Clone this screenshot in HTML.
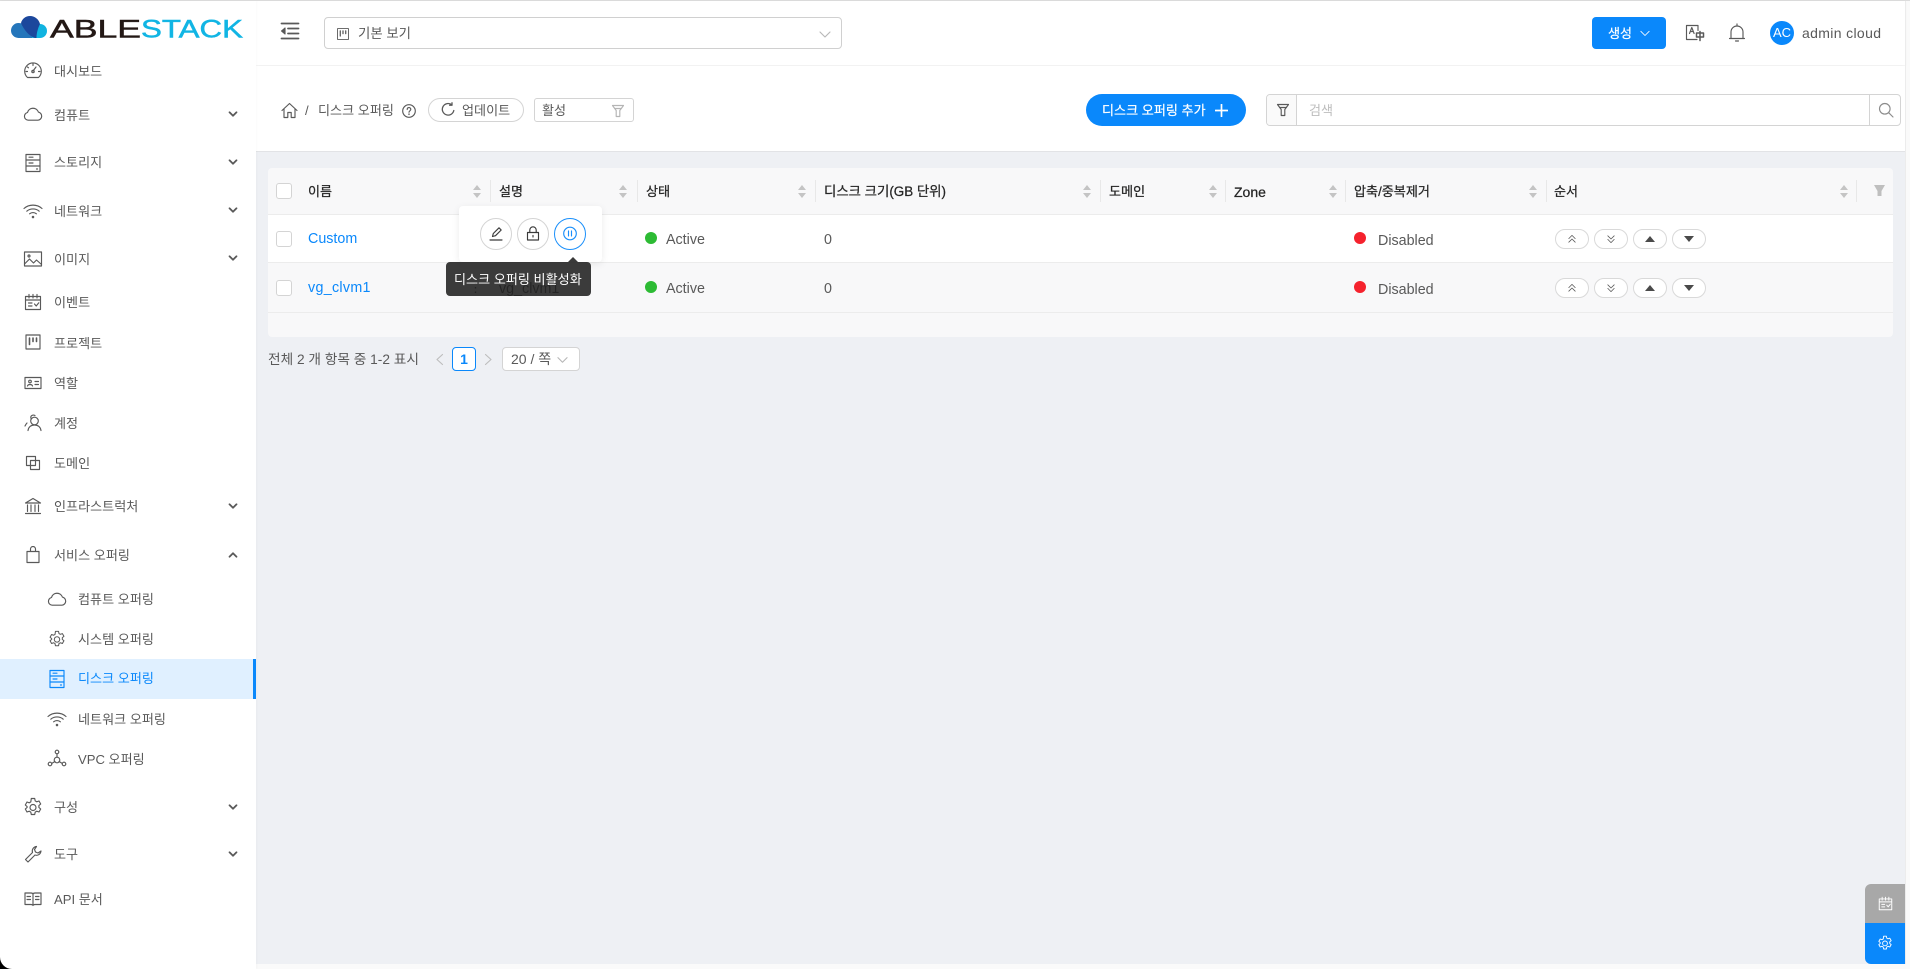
<!DOCTYPE html>
<html lang="ko"><head><meta charset="utf-8"><title>디스크 오퍼링</title>
<style>
*{box-sizing:border-box}
html,body{margin:0;padding:0;width:1910px;height:969px;overflow:hidden;background:#fafafa;font-family:"Liberation Sans","Noto Sans CJK KR",sans-serif;font-size:13px;color:#595959}
.a{position:absolute}
.t{position:absolute;white-space:nowrap;transform:translateY(-50%);line-height:20px;font-size:13.1px}
.s{margin-top:2px}
.m{margin-top:1px}
.l{font-size:14.3px;margin-top:1px}
.i{position:absolute;fill:none;stroke:#595959;stroke-width:1.15;stroke-linecap:round;stroke-linejoin:round}
.h{font-weight:400;color:#262626;-webkit-text-stroke:.25px #262626;margin-top:1px}
.sep{position:absolute;top:180px;width:1px;height:22px;background:#e8e8e8}
.cb{position:absolute;left:276px;width:16px;height:16px;border:1px solid #d4d4d4;border-radius:3px;background:#fff}
.sort{position:absolute;top:185px;width:8px;height:13px}
.sort:before,.sort:after{content:"";position:absolute;left:0;border-left:4px solid transparent;border-right:4px solid transparent}
.sort:before{top:0;border-bottom:5px solid #c4c4c4}
.sort:after{bottom:0;border-top:5px solid #c4c4c4}
.ob{position:absolute;width:34px;height:20px;border:1px solid #d9d9d9;border-radius:10px;background:#fff}
.dot{position:absolute;width:12px;height:12px;border-radius:50%}
.ab{position:absolute;top:218px;width:32px;height:32px;border:1px solid #d4d4d4;border-radius:50%;background:#fff}
.lnk{color:#0a88fb}
</style></head><body>
<svg width="0" height="0" style="position:absolute"><defs>
<symbol id="down" viewBox="0 0 12 12"><path d="M2.500 4.300L6 7.800l3.500-3.500" fill="none" stroke="#595959" stroke-width="1.800" stroke-linecap="round" stroke-linejoin="round"/></symbol>
<symbol id="cloud" viewBox="0 0 20 16"><path d="M5.200 14.200a3.900 3.900 0 0 1-.7-7.700 5.700 5.700 0 0 1 10.900-.4 4.100 4.100 0 0 1-.4 8.100z"/></symbol>
<symbol id="store" viewBox="0 0 18 20"><rect x="2" y="1.500" width="14" height="17"/><path d="M2 7h14M2 13h14M5 4.200h4M5 10h4M12.500 16h1"/></symbol>
<symbol id="wifi" viewBox="0 0 20 16"><path d="M1 5.500c5-4.500 13-4.500 18 0M3.800 8.200c3.400-3 9-3 12.400 0M6.600 10.800c2-1.600 4.800-1.600 6.800 0"/><circle cx="10" cy="14" r=".7"/></symbol>
<symbol id="gear" viewBox="0 0 20 20"><path d="M8.300 1.500h3.400l.5 2.400 1.500.9 2.300-.8 1.700 3-1.800 1.600v1.800l1.800 1.600-1.700 3-2.300-.8-1.500.9-.5 2.400H8.300l-.5-2.400-1.500-.9-2.300.8-1.700-3 1.800-1.600V9.600L2.300 8l1.700-3 2.300.8 1.500-.9z"/><circle cx="10" cy="10.500" r="3"/></symbol>
<symbol id="cal" viewBox="0 0 18 18"><path d="M1.500 3.500h15v13h-15zM1.500 7h15M5 1.500v3.500M9 1.500v3.500M13 1.500v3.500M4.500 10h3.500M4.500 13h3.500M10.500 11l1.700 2 2.600-3.200"/></symbol>
<symbol id="proj" viewBox="0 0 18 18"><rect x="2" y="2" width="14" height="14"/><path d="M5.500 5v6.500M9 5v3.500M12.500 5v3.500" stroke-width="1.600"/></symbol>
<symbol id="funnel" viewBox="0 0 14 14"><path d="M1.500 1.500h11l-3.700 5v6H5.200v-6zM3.500 4.500h7"/></symbol>
</defs></svg>

<!-- top hairline -->
<div class="a" style="left:0;top:0;width:1910px;height:1px;background:#dcdcdc"></div>

<!-- main background -->
<div class="a" style="left:256px;top:152px;width:1649px;height:812px;background:#eef0f4"></div>
<!-- header -->
<div class="a" style="left:256px;top:1px;width:1649px;height:64px;background:#fff;box-shadow:0 1px 3px rgba(0,0,0,.05)"></div>
<div class="a" style="left:256px;top:66px;width:1649px;height:86px;background:#fff;border-bottom:1px solid #e2e3e6"></div>
<div class="a" style="left:1905px;top:1px;width:1px;height:963px;background:#ececec"></div>

<!-- sidebar -->
<div class="a" style="left:0;top:1px;width:256px;height:968px;background:#fff;box-shadow:1px 0 2px rgba(0,0,0,.025)"></div>
<div class="a" style="left:0;top:659px;width:256px;height:40px;background:#e0f0ff"></div>
<div class="a" style="left:253px;top:659px;width:3px;height:40px;background:#0a88fb"></div>

<!-- logo -->
<svg class="a" style="left:10px;top:14px" width="240" height="26" viewBox="0 0 240 26">
<path d="M8.500 24a7.500 7.500 0 0 1 0-15c4 0 7 2 9 5l6 10z" fill="#2576bb"/>
<path d="M30 24a7 7 0 0 0 0-14c-3 0-7 2-9 5l1 9z" fill="#10b3e0"/>
<path d="M11 9C12 5 15.500 2 20 2c5 0 9 3.500 10 8-2 4-3.500 9-3.500 14H25C19 22 14 16 11 9z" fill="#1c479c"/>
<text x="40" y="23.300" font-family="Liberation Sans" font-size="25" fill="#231815" stroke="#231815" stroke-width=".5" textLength="91" lengthAdjust="spacingAndGlyphs">ABLE</text>
<text x="131" y="23.300" font-family="Liberation Sans" font-size="25" fill="#11b5e4" stroke="#11b5e4" stroke-width=".5" textLength="102" lengthAdjust="spacingAndGlyphs">STACK</text>
</svg>

<!-- sidebar items -->
<svg class="i" style="left:23px;top:60px" width="20" height="20" viewBox="0 0 20 20"><path d="M4.500 17.500a8.300 8.300 0 1 1 11 0zM10 11l3-4M10 4v1.500M4.500 7l1 .8M3 11.500h1.500M15.500 11.500H17"/><circle cx="10" cy="11.500" r="1.200"/></svg>
<span class="t s" style="left:54px;top:70px">대시보드</span>
<svg class="i" style="left:23px;top:106px" width="20" height="16"><use href="#cloud"/></svg>
<span class="t s" style="left:54px;top:114px">컴퓨트</span>
<svg class="a" style="left:227px;top:108px" width="12" height="12"><use href="#down"/></svg>
<svg class="i" style="left:24px;top:153px" width="18" height="20"><use href="#store"/></svg>
<span class="t m" style="left:54px;top:162px">스토리지</span>
<svg class="a" style="left:227px;top:156px" width="12" height="12"><use href="#down"/></svg>
<svg class="i" style="left:23px;top:203px" width="20" height="16"><use href="#wifi"/></svg>
<span class="t s" style="left:54px;top:210px">네트워크</span>
<svg class="a" style="left:227px;top:204px" width="12" height="12"><use href="#down"/></svg>
<svg class="i" style="left:23px;top:250px" width="20" height="18" viewBox="0 0 20 18"><rect x="1.500" y="2" width="17" height="14"/><path d="M1.500 14l5-5 4 4 3-3 5 4.500"/><circle cx="6" cy="6" r="1"/></svg>
<span class="t s" style="left:54px;top:258px">이미지</span>
<svg class="a" style="left:227px;top:252px" width="12" height="12"><use href="#down"/></svg>
<svg class="i" style="left:24px;top:293px" width="18" height="18"><use href="#cal"/></svg>
<span class="t m" style="left:54px;top:302px">이벤트</span>
<svg class="i" style="left:24px;top:333px" width="18" height="18"><use href="#proj"/></svg>
<span class="t s" style="left:54px;top:342px">프로젝트</span>
<svg class="i" style="left:24px;top:376px" width="18" height="14" viewBox="0 0 18 14"><rect x="1" y="1.500" width="16" height="11"/><circle cx="6" cy="5.500" r="1.300"/><path d="M3.500 10c.5-2 4.500-2 5 0M11 5.500h3.500M11 8.500h3.500"/></svg>
<span class="t m" style="left:54px;top:383px">역할</span>
<svg class="i" style="left:24px;top:414px" width="18" height="18" viewBox="0 0 18 18"><circle cx="10.500" cy="7" r="3.800"/><path d="M4 16.500c.5-3.500 3-5.500 6.500-5.500s6 2 6.500 5.500M7 4.500C6 1.500 9 .5 11 1.500M3 9c-1 1-1.500 2-2 3"/></svg>
<span class="t m" style="left:54px;top:423px">계정</span>
<svg class="i" style="left:25px;top:455px" width="16" height="16" viewBox="0 0 16 16"><rect x="1.500" y="1.500" width="9" height="9"/><rect x="5.500" y="5.500" width="9" height="9"/></svg>
<span class="t m" style="left:54px;top:463px">도메인</span>
<svg class="i" style="left:24px;top:497px" width="18" height="18" viewBox="0 0 18 18"><path d="M1.500 6L9 1.500 16.500 6zM3.500 8v6.500M7 8v6.500M11 8v6.500M14.500 8v6.500M1.500 16.500h15"/></svg>
<span class="t m" style="left:54px;top:506px">인프라스트럭처</span>
<svg class="a" style="left:227px;top:500px" width="12" height="12"><use href="#down"/></svg>
<svg class="i" style="left:25px;top:546px" width="16" height="18" viewBox="0 0 16 18"><path d="M2 5.500h12v11H2zM5.500 5.500V3a2.500 2.500 0 0 1 5 0v2.500"/></svg>
<span class="t m" style="left:54px;top:555px">서비스 오퍼링</span>
<svg class="a" style="left:227px;top:549px;transform:rotate(180deg)" width="12" height="12"><use href="#down"/></svg>

<svg class="i" style="left:47px;top:591px" width="20" height="16"><use href="#cloud"/></svg>
<span class="t s" style="left:78px;top:598px">컴퓨트 오퍼링</span>
<svg class="i" style="left:48px;top:630px" width="18" height="18" viewBox="0 0 20 20"><use href="#gear"/></svg>
<span class="t s" style="left:78px;top:638px">시스템 오퍼링</span>
<svg class="i" style="left:48px;top:669px;stroke:#0a88fb" width="18" height="20"><use href="#store"/></svg>
<span class="t m" style="left:78px;top:678px;color:#0a88fb">디스크 오퍼링</span>
<svg class="i" style="left:47px;top:711px" width="20" height="16"><use href="#wifi"/></svg>
<span class="t s" style="left:78px;top:718px">네트워크 오퍼링</span>
<svg class="i" style="left:47px;top:749px" width="20" height="18" viewBox="0 0 20 18"><circle cx="10" cy="3" r="1.800"/><circle cx="3" cy="15" r="1.800"/><circle cx="17" cy="15" r="1.800"/><circle cx="10" cy="11" r="2.800"/><path d="M10 4.800v3.400M5 14.300l3-1.800M15 14.300l-3-1.800"/></svg>
<span class="t s" style="left:78px;top:758px">VPC 오퍼링</span>

<svg class="i" style="left:23px;top:797px" width="20" height="20"><use href="#gear"/></svg>
<span class="t m" style="left:54px;top:807px">구성</span>
<svg class="a" style="left:227px;top:801px" width="12" height="12"><use href="#down"/></svg>
<svg class="i" style="left:24px;top:845px" width="18" height="18" viewBox="0 0 18 18"><path d="M1.500 14.500l7-7c-.8-2.500.5-5.500 4-6l-2 3 1 2.500 2.500 1 3-2c-.5 3.500-3.500 5-6 4l-7 7z"/></svg>
<span class="t m" style="left:54px;top:854px">도구</span>
<svg class="a" style="left:227px;top:848px" width="12" height="12"><use href="#down"/></svg>
<svg class="i" style="left:24px;top:891px" width="18" height="16" viewBox="0 0 18 16"><path d="M1 2h6c1 0 2 .5 2 1.500C9 2.500 10 2 11 2h6v11.500h-6c-1 0-2 .5-2 1-0-.5-1-1-2-1H1zM9 3.500v11M3 5.500h3.500M3 8.500h3.500M11.500 5.500H15M11.500 8.500H15"/></svg>
<span class="t m" style="left:54px;top:899px">API 문서</span>

<!-- bottom-left corner -->
<svg class="a" style="left:0;top:957px" width="12" height="12"><path d="M0 0v12h12A12 12 0 0 1 0 0z" fill="#000"/></svg>

<!-- header contents -->
<svg class="i" style="left:280px;top:22px" width="20" height="18" viewBox="0 0 20 18"><path d="M1.500 1.500h17M8 6.500h10.500M8 11.500h10.500M1.500 16.500h17" stroke-width="1.800"/><path d="M5 6v6L1.500 9z" fill="#595959"/></svg>
<div class="a" style="left:324px;top:17px;width:518px;height:32px;border:1px solid #d0d0d0;border-radius:4px;background:#fff"></div>
<svg class="i" style="left:336px;top:27px" width="14" height="14"><use href="#proj"/></svg>
<span class="t m" style="left:358px;top:33px;font-size:13.4px">기본 보기</span>
<svg class="i" style="left:819px;top:28px;stroke:#b8b8b8" width="12" height="12" viewBox="0 0 12 12"><path d="M1 4l5 5 5-5"/></svg>

<div class="a" style="left:1592px;top:17px;width:74px;height:32px;background:#0a88fb;border-radius:4px"></div>
<span class="t m" style="left:1608px;top:33px;color:#fff;-webkit-text-stroke:.2px #fff">생성</span>
<svg class="i" style="left:1640px;top:28px;stroke:#fff;stroke-width:1" width="10" height="10" viewBox="0 0 12 12"><path d="M1 4l5 5 5-5"/></svg>
<svg class="i" style="left:1685px;top:24px" width="20" height="18" viewBox="0 0 20 18"><path d="M12 15.500H1.500V1.500H13v5"/><path d="M4.500 9.500l2.300-6 2.300 6M5.300 7.500h3"/><path d="M11.500 9h7v4h-7zM15 7.500v9" stroke-width="1.500"/></svg>
<svg class="i" style="left:1728px;top:23px" width="18" height="20" viewBox="0 0 18 20"><path d="M3 15.500V9a6 6 0 0 1 12 0v6.500zM1.500 15.500h15M7.500 18h3M9 1v2"/></svg>
<div class="a" style="left:1770px;top:21px;width:24px;height:24px;border-radius:50%;background:#0a88fb"></div>
<span class="t" style="left:1770px;top:33px;width:24px;text-align:center;color:#fff;font-size:13px">AC</span>
<span class="t" style="left:1802px;top:33px;font-size:14px;letter-spacing:.35px">admin cloud</span>

<!-- breadcrumb -->
<svg class="i" style="left:281px;top:102px" width="17" height="17" viewBox="0 0 17 17"><path d="M1 8.500L8.500 1.500 16 8.500M3 7v8.500h3.800v-5h3.400v5H14V7"/></svg>
<span class="t s" style="left:305px;top:109px">/</span>
<span class="t s" style="left:318px;top:109px">디스크 오퍼링</span>
<svg class="i" style="left:402px;top:104px" width="14" height="14" viewBox="0 0 14 14"><circle cx="7" cy="7" r="6.300"/><path d="M5.200 5.500C5.200 3 8.800 3 8.800 5.300c0 1.500-1.800 1.500-1.800 3"/><circle cx="7" cy="10.300" r=".3"/></svg>
<div class="a" style="left:428px;top:98px;width:96px;height:24px;border:1px solid #d4d4d4;border-radius:12px;background:#fff"></div>
<svg class="i" style="left:441px;top:102px;stroke-width:1.300" width="14" height="14" viewBox="0 0 14 14"><path d="M10.800 2.800A5.800 5.800 0 1 0 12.800 8.500M11 .8v2.400H8.600" /></svg>
<span class="t s" style="left:462px;top:109px">업데이트</span>
<div class="a" style="left:534px;top:98px;width:100px;height:24px;border:1px solid #d4d4d4;border-radius:3px;background:#fff"></div>
<span class="t s" style="left:542px;top:109px">활성</span>
<svg class="i" style="left:611px;top:104px;stroke:#b5b5b5" width="14" height="14"><use href="#funnel"/></svg>

<div class="a" style="left:1086px;top:94px;width:160px;height:32px;border-radius:16px;background:#0a88fb"></div>
<span class="t s" style="left:1102px;top:109px;color:#fff;-webkit-text-stroke:.2px #fff">디스크 오퍼링 추가</span>
<svg class="i" style="left:1215px;top:104px;stroke:#fff;stroke-width:1.700" width="13" height="13" viewBox="0 0 13 13"><path d="M6.500 .5v12M.5 6.500h12"/></svg>

<div class="a" style="left:1266px;top:94px;width:635px;height:32px;border:1px solid #d4d4d4;border-radius:4px;background:#fff"></div>
<div class="a" style="left:1267px;top:95px;width:30px;height:30px;background:#fafafa;border-right:1px solid #d4d4d4;border-radius:3px 0 0 3px"></div>
<svg class="i" style="left:1276px;top:103px" width="14" height="14"><use href="#funnel"/></svg>
<span class="t m" style="left:1309px;top:110px;color:#bdbdbd">검색</span>
<div class="a" style="left:1869px;top:95px;width:1px;height:30px;background:#d4d4d4"></div>
<svg class="i" style="left:1878px;top:102px;stroke:#8c8c8c" width="16" height="16" viewBox="0 0 16 16"><circle cx="6.800" cy="6.800" r="5.300"/><path d="M10.800 10.800l4.200 4.200"/></svg>

<!-- table -->
<div class="a" style="left:268px;top:168px;width:1625px;height:169px;background:#f8f8f9;border-radius:4px"></div>
<div class="a" style="left:268px;top:214px;width:1625px;height:49px;background:#fff;border-top:1px solid #ececec;border-bottom:1px solid #ececec"></div>
<div class="a" style="left:268px;top:312px;width:1625px;height:1px;background:#ececec"></div>

<div class="cb" style="top:183px"></div>
<span class="t h" style="left:308px;top:191px">이름</span>
<div class="sort" style="left:473px"></div><div class="sep" style="left:490px"></div>
<span class="t h" style="left:499px;top:191px">설명</span>
<div class="sort" style="left:619px"></div><div class="sep" style="left:637px"></div>
<span class="t h" style="left:646px;top:191px">상태</span>
<div class="sort" style="left:798px"></div><div class="sep" style="left:815px"></div>
<span class="t h" style="left:824px;top:191px;font-size:13.4px">디스크 크기(GB 단위)</span>
<div class="sort" style="left:1083px"></div><div class="sep" style="left:1100px"></div>
<span class="t h" style="left:1109px;top:191px">도메인</span>
<div class="sort" style="left:1209px"></div><div class="sep" style="left:1225px"></div>
<span class="t h l" style="left:1234px;top:191px;font-size:14px">Zone</span>
<div class="sort" style="left:1329px"></div><div class="sep" style="left:1345px"></div>
<span class="t h" style="left:1354px;top:191px">압축/중복제거</span>
<div class="sort" style="left:1529px"></div><div class="sep" style="left:1546px"></div>
<span class="t h" style="left:1554px;top:191px">순서</span>
<div class="sort" style="left:1840px"></div><div class="sep" style="left:1856px"></div>
<svg class="a" style="left:1874px;top:184px" width="11" height="14" viewBox="0 0 11 14"><path d="M0 1h11L7.500 7v5h-4V7z" fill="#bfbfbf"/></svg>

<!-- row 1 -->
<div class="cb" style="top:231px"></div>
<span class="t lnk l" style="left:308px;top:238px">Custom</span>
<div class="dot" style="left:645px;top:232px;background:#2dbb34"></div>
<span class="t l" style="left:666px;top:239px">Active</span>
<span class="t l" style="left:824px;top:239px">0</span>
<div class="dot" style="left:1354px;top:232px;background:#f5222d"></div>
<span class="t l" style="left:1378px;top:240px">Disabled</span>

<!-- row 2 -->
<div class="cb" style="top:280px"></div>
<span class="t lnk l" style="left:308px;top:287px;letter-spacing:.3px">vg_clvm1</span>
<span class="t" style="left:469px;top:288px;color:#262626">⋮</span>
<span class="t l" style="left:499px;top:288px;color:#262626">vg_clvm1</span>
<div class="dot" style="left:645px;top:281px;background:#2dbb34"></div>
<span class="t l" style="left:666px;top:288px">Active</span>
<span class="t l" style="left:824px;top:288px">0</span>
<div class="dot" style="left:1354px;top:281px;background:#f5222d"></div>
<span class="t l" style="left:1378px;top:289px">Disabled</span>

<!-- order buttons -->
<div class="ob" style="left:1555px;top:229px"></div><div class="ob" style="left:1594px;top:229px"></div><div class="ob" style="left:1633px;top:229px"></div><div class="ob" style="left:1672px;top:229px"></div>
<div class="ob" style="left:1555px;top:278px"></div><div class="ob" style="left:1594px;top:278px"></div><div class="ob" style="left:1633px;top:278px"></div><div class="ob" style="left:1672px;top:278px"></div>
<svg class="i" style="left:1568px;top:234px;stroke-width:1" width="8" height="10" viewBox="0 0 10 12"><path d="M1 5.500l4-4 4 4M1 10l4-4 4 4"/></svg>
<svg class="i" style="left:1607px;top:234px;stroke-width:1" width="8" height="10" viewBox="0 0 10 12"><path d="M1 2l4 4 4-4M1 6.500l4 4 4-4"/></svg>
<svg class="a" style="left:1645px;top:235px" width="10" height="8"><path d="M0 7L5 1l5 6z" fill="#4a4a4a"/></svg>
<svg class="a" style="left:1684px;top:235px" width="10" height="8"><path d="M0 1l5 6 5-6z" fill="#4a4a4a"/></svg>
<svg class="i" style="left:1568px;top:283px;stroke-width:1" width="8" height="10" viewBox="0 0 10 12"><path d="M1 5.500l4-4 4 4M1 10l4-4 4 4"/></svg>
<svg class="i" style="left:1607px;top:283px;stroke-width:1" width="8" height="10" viewBox="0 0 10 12"><path d="M1 2l4 4 4-4M1 6.500l4 4 4-4"/></svg>
<svg class="a" style="left:1645px;top:284px" width="10" height="8"><path d="M0 7L5 1l5 6z" fill="#4a4a4a"/></svg>
<svg class="a" style="left:1684px;top:284px" width="10" height="8"><path d="M0 1l5 6 5-6z" fill="#4a4a4a"/></svg>

<!-- action popup -->
<div class="a" style="left:459px;top:206px;width:143px;height:56px;background:#fff;border-radius:4px;box-shadow:0 2px 8px rgba(0,0,0,.08)"></div>
<div class="ab" style="left:480px"></div><div class="ab" style="left:517px"></div><div class="ab" style="left:554px;border-color:#1a8ffa"></div>
<svg class="i" style="left:489px;top:226px;stroke:#3a3a3a" width="14" height="15" viewBox="0 0 14 15"><path d="M1 14h12M3.500 10.500l.8-3L10 1.800l2.200 2.200L6.500 9.700z"/></svg>
<svg class="i" style="left:526px;top:226px;stroke:#3a3a3a" width="14" height="15" viewBox="0 0 14 15"><rect x="1.500" y="6.500" width="11" height="7.500"/><path d="M3.800 6.500V4a3.200 3.200 0 0 1 6.400 0v2.500M7 9.500v1.500"/></svg>
<svg class="i" style="left:563px;top:226px;stroke:#1a8ffa" width="14" height="15" viewBox="0 0 14 14"><circle cx="7" cy="7" r="6.300"/><path d="M5.500 4.500v5M8.500 4.500v5"/></svg>

<!-- tooltip -->
<div class="a" style="left:446px;top:262px;width:145px;height:34px;background:rgba(38,38,38,.9);border-radius:4px"></div>
<div class="a" style="left:568px;top:257px;width:0;height:0;border-left:5px solid transparent;border-right:5px solid transparent;border-bottom:5px solid #3a3a3a"></div>
<span class="t m" style="left:454px;top:279px;color:#fff">디스크 오퍼링 비활성화</span>

<!-- pagination -->
<span class="t m" style="left:268px;top:359px;font-size:13.7px">전체 2 개 항목 중 1-2 표시</span>
<svg class="i" style="left:435px;top:353px;stroke:#bdbdbd" width="9" height="13" viewBox="0 0 9 13"><path d="M7.500 1.500l-5.500 5 5.500 5"/></svg>
<div class="a" style="left:452px;top:347px;width:24px;height:24px;border:1px solid #0a88fb;border-radius:4px;background:#fff"></div>
<span class="t" style="left:452px;top:359px;width:24px;text-align:center;color:#0a88fb;font-weight:700;font-size:14px">1</span>
<svg class="i" style="left:484px;top:353px;stroke:#bdbdbd" width="9" height="13" viewBox="0 0 9 13"><path d="M1.500 1.500l5.500 5-5.500 5"/></svg>
<div class="a" style="left:502px;top:347px;width:78px;height:24px;border:1px solid #d4d4d4;border-radius:4px;background:#fff"></div>
<span class="t" style="left:511px;top:359px;font-size:14px">20 / 쪽</span>
<svg class="i" style="left:557px;top:354px;stroke:#b5b5b5" width="11" height="11" viewBox="0 0 12 12"><path d="M1 4l5 5 5-5"/></svg>

<!-- floating buttons -->
<div class="a" style="left:1865px;top:884px;width:40px;height:39px;background:#a8a8a8;border-radius:6px 0 0 0"></div>
<svg class="i" style="left:1878px;top:896px;stroke:#fff" width="15" height="15"><use href="#cal"/></svg>
<div class="a" style="left:1865px;top:923px;width:40px;height:41px;background:#0a88fb;border-radius:0 0 0 6px"></div>
<svg class="i" style="left:1877px;top:935px;stroke:#fff" width="16" height="16" viewBox="0 0 20 20"><use href="#gear"/></svg>
</body></html>
